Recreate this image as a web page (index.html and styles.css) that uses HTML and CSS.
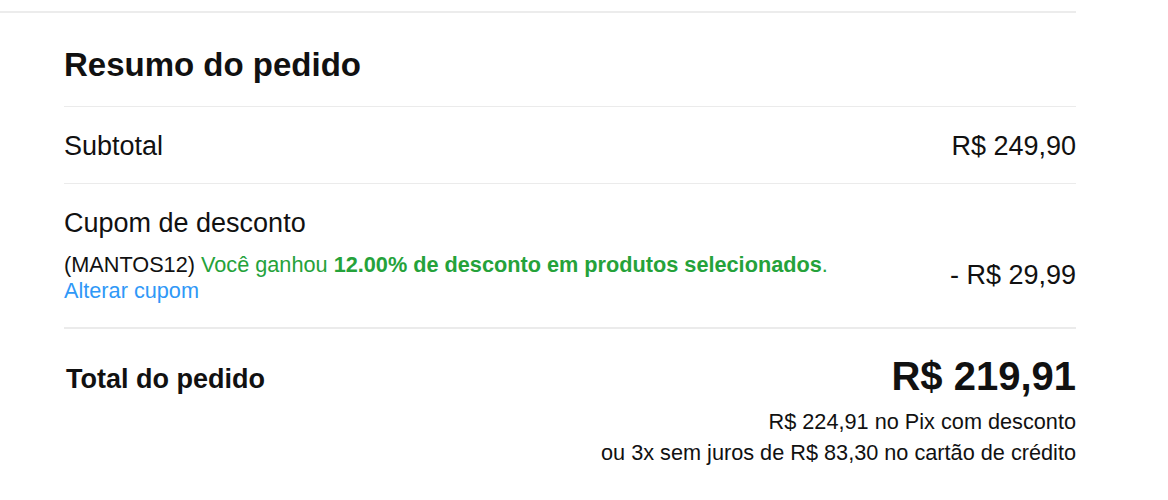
FILE: index.html
```html
<!DOCTYPE html>
<html lang="pt-BR">
<head>
  <meta charset="UTF-8" />
  <meta name="viewport" content="width=device-width, initial-scale=1.0"/>
  <title>Resumo do pedido</title>
  <link rel="stylesheet" href="styles.css">
</head>
<body>

  <div class="panel">
    <div class="summary">
      <h2>Resumo do pedido</h2>

      <!-- Subtotal -->
      <div class="row">
        <span>Subtotal</span>
        <span>R$ 249,90</span>
      </div>

      <!-- Cupom -->
      <div class="coupon">
        <div class="coupon-title">Cupom de desconto</div>
        <div class="coupon-line">
          <div class="coupon-info">
            <div>(MANTOS12) <span class="ok">Você ganhou <b>12.00% de desconto em produtos selecionados</b>.</span></div>
            <a href="#" class="change">Alterar cupom</a>
          </div>
          <span class="discount">- R$ 29,99</span>
        </div>
      </div>

      <!-- Total -->
      <div class="total">
        <div class="total-main">
          <span class="total-label">Total do pedido</span>
          <span class="total-value">R$ 219,91</span>
        </div>
        <div class="total-notes">
          <div>R$ 224,91 no Pix com desconto</div>
          <div>ou 3x sem juros de R$ 83,30 no cartão de crédito</div>
        </div>
      </div>
    </div>
  </div>

</body>
</html>
```

FILE: styles.css
```css
* {
  box-sizing: border-box;
}

body {
  margin: 0;
  background: #fff;
  color: #111;
  font-family: "Liberation Sans", Arial, sans-serif;
}

.panel {
  width: 1076px;
  margin-top: 11px;
  border-top: 2px solid #ececec;
}

.summary {
  margin-left: 64px;
}

.summary h2 {
  margin: 0;
  padding: 32px 0 21px;
  font-size: 33px;
  line-height: 40px;
  font-weight: 700;
}

.row {
  display: flex;
  justify-content: space-between;
  border-top: 1px solid #ebebeb;
  padding: 23px 0 21px;
  font-size: 27px;
  line-height: 32px;
}

/* Cupom */
.coupon {
  border-top: 1px solid #ebebeb;
  padding: 23px 0 23px;
}

.coupon-title {
  font-size: 27px;
  line-height: 32px;
}

.coupon-line {
  display: flex;
  justify-content: space-between;
  align-items: flex-start;
  margin-top: 13px;
}

.coupon-info {
  font-size: 21.7px;
  line-height: 26px;
}

.coupon-info .ok {
  color: #25a23a;
}

.coupon-info .change {
  color: #2f98f7;
  text-decoration: none;
}

.discount {
  font-size: 27px;
  line-height: 32px;
  margin-top: 7px;
}

/* Total */
.total {
  border-top: 2px solid #ebebeb;
  padding-top: 24px;
  text-align: right;
}

.total-main {
  display: flex;
  justify-content: space-between;
  align-items: center;
}

.total-label {
  padding: 6px 0 0 2px;
  font-size: 27px;
  line-height: 30px;
  font-weight: 700;
}

.total-value {
  font-size: 40px;
  line-height: 46px;
  font-weight: 700;
}

.total-notes {
  margin-top: 7px;
  font-size: 21.7px;
  line-height: 31px;
}
```
